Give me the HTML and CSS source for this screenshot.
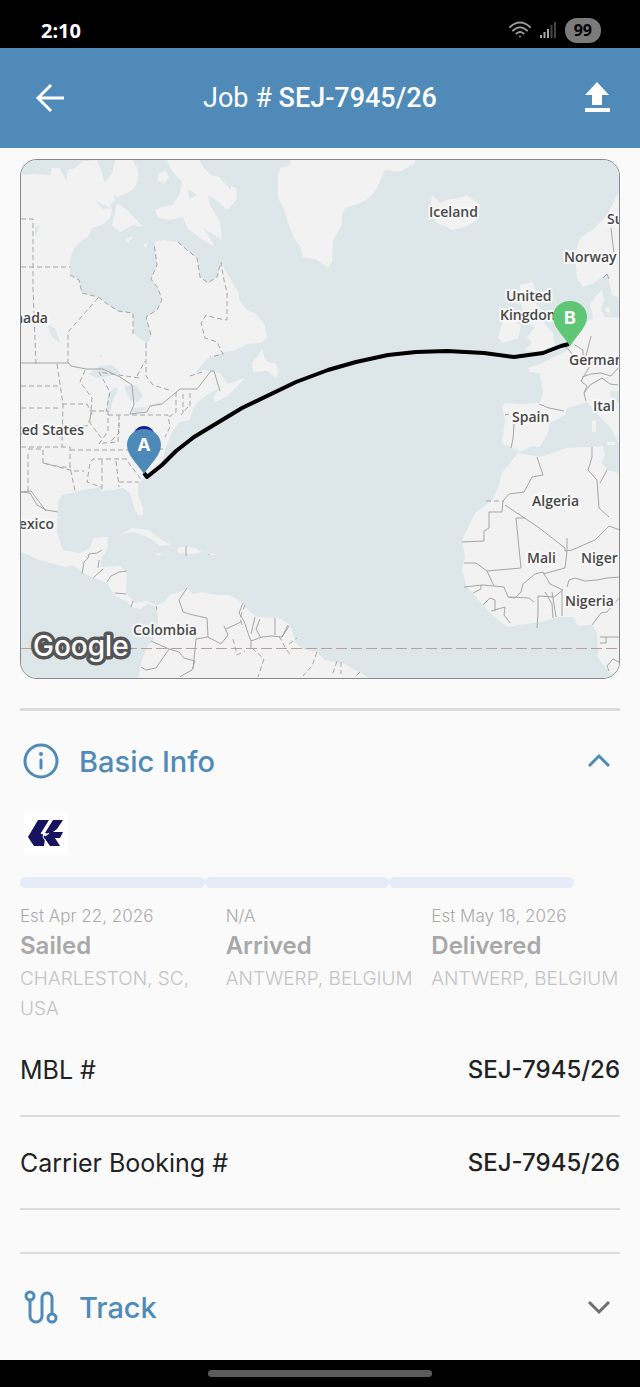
FILE: index.html
```html
<!DOCTYPE html>
<html lang="en">
  <head>
    <meta charset="UTF-8" />
    <meta name="viewport" content="width=device-width, initial-scale=1" />
    <title>Job # SEJ-7945/26</title>
    <link rel="stylesheet" href="styles.css">
  </head>
  <body>
    <div class="status-bar">
      <span class="time">2:10</span>
      <div class="status-icons">
        <svg width="22" height="18" viewBox="0 0 22 18" fill="none" stroke="#999" stroke-width="2" stroke-linecap="round">
          <path d="M1 6Q11-3 21 6M4 9.500Q11 3 18 9.500M7.500 12.500Q11 9.500 14.500 12.500" />
          <circle cx="11" cy="15.500" r="1" fill="#999" stroke="none" />
        </svg>
        <svg width="16" height="18" viewBox="0 0 16 18" stroke-width="2">
          <path d="M1 17v-3M4.500 17v-6M8 17V8" stroke="#aaa" />
          <path d="M11.500 17V4M15 17V1" stroke="#444" />
        </svg>
        <span class="battery">99</span>
      </div>
    </div>

    <header class="app-bar">
      <button class="icon-btn" aria-label="Back">
        <svg width="40" height="32" viewBox="0 0 40 32" fill="none" stroke="#fff" stroke-width="3">
          <path d="M37 16H11M24 3L11 16l13 13" />
        </svg>
      </button>
      <h1>Job # <strong>SEJ-7945/26</strong></h1>
      <button class="icon-btn" aria-label="Share">
        <svg width="40" height="32" viewBox="0 0 40 32" fill="#fff">
          <path d="M24 0L36 13h-7v10H19V13H12zM12 26h25v4H12z" />
        </svg>
      </button>
    </header>

    <main>
      <div class="map">
        <svg viewBox="21 160 598 518" role="img" aria-label="Route map">
          <rect class="sea" x="21" y="160" width="598" height="518" />

          <g class="land">
            <!-- Americas -->
            <path d="M20 175L33 174 50 175 52 168 60 168 66 181 68 170 75 168 83 161 97 160 101 170 105 182 112 173 115 160H133L138 170 138 180 135 188 127 193 119 197 113 195 115 200 110 205 112 210 110 218 102 225 92 228 88 237 82 240 75 247 70 258 70 275 79 280 82 293 98 297 106 303 118 311 133 313 133 332 137 337 148 343 151 335 146 317 157 310 162 300 158 288 151 279 157 265 154 242 163 240 178 242 187 250 197 258 200 277 208 283 217 277 221 262 228 275 238 292 240 302 247 310 255 313 265 325 267 338 260 343 248 344 235 350 222 353 207 359 195 373 203 370 220 373 225 380 228 384 245 378 228 396 215 402 213 397 220 388 210 393 200 400 193 408 190 420 180 422 173 430 165 450 163 460 154 467 145 475 138 485 138 495 143 507 143 515 139 516 135 510 132 500 130 493 123 488 113 490 103 491 100 487 83 490 75 492 62 495 58 502 57 533 63 550 80 553 90 548 93 538 108 537 107 550 102 557 100 567 120 566 127 572 126 593 135 603 147 601 157 605 163 603 170 595 180 592 187 588 193 594 202 592 216 595 230 595 243 603 249 611 258 617 280 618 290 625 296 643 303 649 317 652 325 660 343 663 353 669 360 672 370 679H138L142 660 147 647 153 640 158 627 158 613 154 606 148 604 140 609 132 607 126 601 115 596 107 583 93 578 82 572 73 565 65 567 40 560 21 552z" />
            <!-- Arctic islands -->
            <path d="M167 160L172 171 182 182 180 193 173 205 162 207 155 210 158 218 170 220 183 217 187 228 200 238 215 247 210 238 203 228 222 240 220 222 210 205 208 195 216 200 227 210 237 199 236 188 226 184 220 177 211 175 203 167 200 160z" />
            <path d="M117 203L127 210 143 227 133 225 120 232 112 225zM158 174L165 170 169 177 165 183 158 181zM125 239L134 236 128 243zM143 244l5-1-2 5z" />
            <path d="M205 160H231V190L219 177z" class="sea" />
            <!-- Greenland -->
            <path d="M290 160L290 165 280 168 278 175 278 198 284 209 288 222 294 238 300 246 303 257 317 260 328 268 332 262 333 240 342 225 342 214 345 208 358 204 366 200 375 192 385 170 400 172 415 163 415 160z" />
            <!-- Newfoundland, Caribbean -->
            <path d="M252 363L262 350 266 361 276 364 279 371 276 378 268 371 253 372zM122 534L132 528 148 530 162 540 172 545 160 546 150 538 134 532zM178 548L185 546 195 548 202 552 193 554 178 553zM154 553l8 1-3 2zM209 554h7v1h-7z" />
            <!-- Iceland -->
            <path d="M432 195L440 203 450 199 459 198 467 195 480 205 477 220 465 227 453 230 437 223 430 212z" />
            <!-- British Isles -->
            <path d="M520 285L533 282 535 290 530 296 539 307 543 322 553 333 555 345 540 352 525 350 532 342 527 337 535 327 528 322 530 314 522 309zM502 323L510 316 521 326 518 338 503 343 498 338z" />
            <!-- Scandinavia -->
            <path d="M620 190L607 215 595 228 580 238 575 255 577 278 583 287 594 283 607 273 612 295 620 298z" />
            <path d="M620 318L605 317 601 310 604 299 602 290 595 297 590 305 593 318 583 325 573 345 565 352 548 360 540 364 528 368 530 372 540 373 543 393 540 403 518 404 505 403 502 407 505 420 502 443 512 448 520 452 532 446 540 447 548 433 550 423 565 415 567 408 578 405 587 402 600 417 610 427 618 442H620z" />
            <path d="M592 421l4-1v12h-4zM607 442h8v3h-8zM605 309l4-2 2 6-5-1z" />
            <!-- Africa -->
            <path d="M518 453L540 457 567 448 590 447 603 446 605 455 602 463 607 470 620 473V672L610 673 598 658 597 633 592 625 578 626 573 617 558 617 545 621 533 623 507 627 490 613 467 587 462 570 465 557 462 540 475 513 492 500 498 487 502 473z" />
          </g>

          <!-- lakes and inner seas -->
          <g class="sea">
            <path d="M88 374L100 366 112 365 121 373 108 376 97 378zM107 410L108 393 116 387 118 390 112 402 110 413zM124 386L136 385 143 396 138 402 130 400 127 394zM130 409L143 407 149 408 135 414zM149 406l12-4v3zM48 325l7 3 5 15-9-7z" />
            <path d="M188 189l9 6-8 4zM95 201l16 7-8 1zM610 391h9v12l-9-8zM35 228l5-3-5 12zM99 355l4 1-2 2z" />
          </g>

          <!-- dashed state lines -->
          <g class="state">
            <path d="M21 219h12v70l3 75M21 267h49M98 298l-30 34v31M70 275l9 5 3 13 16 4 8 6 12 8 15 2v21M151 335l-5-18 11-7 5-10-4-12-7-9 6-14-3-22M178 242l9 8 10 8 3 19 8 6 9-6 4-15 3 18 3 12v28l-12-2-9-3-5 8 4 15 12 4 6 12-13 3M146 343v33l7 9 19 6" />
            <path d="M21 386h37M21 408h40M57 364l6 40-1 43M62 404h25l5 10-5 12h-25M85 370l-5 12 12 16-2 25 12 16M91 411h17v20l-9 13 5-1 14-1 1-20M119 415v18l-8 8M108 415h60l2 12-5 10M21 447h49v20l5 24M28 449h15v14l18 4h10M43 463l31 8h10M70 450h57l37-1M127 459h-34l-3 4-3 19 14 5M102 460v31M116 461l3 26M128 462l13 17M119 482h20M176 392v20l-7 5M183 394v19M190 393v13M188 407l-7 8M139 378l-40-6 11 20-4 20M190 376l12-4M137 376l8-15" />
            <path d="M245 605l-5 13 3 10M233 639l4 16 8-4M252 648l12 11-6 18M279 636l7 13 4 5M317 652l-5 14-9 10M337 661l-5 15M341 662v12M360 672l-5 5M289 644l8-6M28 454v39M209 554v1M486 501h18" />
          </g>

          <!-- country borders -->
          <g class="border">
            <path d="M21 363h48l2 3 15 3h17l17 8 12 8 2 20-4 9 17-2 3-6 12-2 18-15h17l14-18h3l6 20M21 492l10-1 15 20M21 492l9 1 7 12 9 5 12 2M82 574l2-12 4-4 1-4 8-1 5-3M93 578l10-9M98 568l1-8M107 582l4-6 8-4 8-1M115 593l11 1M131 607l2-6M157 610l-1-4M187 588l-8 12 4 12 10 3 14 3 1 19 13 7 7-9-4-9M243 603l-4 10 5 8 5 15 2 5v8M251 641l11-4 10-1 10 1 6-12M241 622l-15 7M275 618v17M282 637l7-11M255 617l-4 17M260 619l-4 10 5 9M208 637l-12 2-3 30M151 641l18 8-13 19-10 2-5-3M169 649l10 3 5 6 11 3-3 9-11 6-1 1" />
            <path d="M611 228l3 25M603 278l4-4 2 5M575 345l8 5v5l3 1 5-20M564 346l5 4 6 8M594 359l-13 22 6 5-3 7 2 8M582 377l9-3 10-1 10 3 7-8M584 393l6-8 12-7 8 6 8 1M539 404l10 4 15 3M505 415l4-1M514 424l-1 15-2 9M537 457l6 18-11 2-8 15-15 2-6 7-1 11H489v16l-5 3v10l-22 1M505 505l33 22 27 21v3l7-1 23-10 14-14 11 4M567 538v13l-2 17-22 6M516 518h9M516 518l5 50-34 3M592 447v10l-4 13 9 10 2 28 10 9M607 470l-7 13M464 563h12l11 8 7 15 10 1 4 10 7 1 6-6 2-8 12-10 8-2 7 12 13 6-9 7-16-1v17l-1 15M464 587l9-1 9-1 12 1M473 593l8-4v-4M483 605l7-7 5 2v11M491 611l14-4-1 8 6 8M509 597l20 1 5 4M545 592l7 12 1 14M552 592l4 25M562 591v25M567 587l2-7 6-2 10 3 12-1 10-2 13-1M592 625l9-12 6-1 13-15M600 637h20M600 643h6v-6M609 671l-2-5 6-7 6 3" />
            <path d="M186 546v10" />
          </g>

          <path class="equator" d="M21 648.500H619" />

          <g class="place">
            <text x="429" y="217">Iceland</text>
            <text x="607" y="224">Su</text>
            <text x="564" y="262">Norway</text>
            <text x="506" y="301">United</text>
            <text x="500" y="320">Kingdom</text>
            <text x="569" y="365">German</text>
            <text x="593" y="411">Ital</text>
            <text x="512" y="422">Spain</text>
            <text x="532" y="506">Algeria</text>
            <text x="527" y="563">Mali</text>
            <text x="581" y="563">Niger</text>
            <text x="565" y="606">Nigeria</text>
            <text x="133" y="635">Colombia</text>
            <text x="48" y="323" text-anchor="end">Canada</text>
            <text x="84" y="435" text-anchor="end">United States</text>
            <text x="54" y="529" text-anchor="end">Mexico</text>
          </g>

          <path class="route" d="M144 473L147 477 162 465 176 451 194 437 242 408 296 382 328 370 356 362 388 355 416 352 447 351 484 353 514 357 543 353 561 346 569 344" />

          <!-- markers -->
          <circle cx="144" cy="437" r="11" fill="#1c1c94" />
          <path fill="#4d8ab9" d="M144 429c-10 0-17 7-17 16 0 10 10 18 17 29 7-11 17-19 17-29 0-9-7-16-17-16z" />
          <path fill="#5fc675" d="M570 301c-10 0-17 7-17 16 0 10 10 18 17 29 7-11 17-19 17-29 0-9-7-16-17-16z" />
          <text class="pin" x="144" y="451">A</text>
          <text class="pin" x="570" y="324">B</text>

          <text class="google" x="33" y="656">Google</text>
        </svg>
      </div>

      <section class="panel">
        <button class="panel-head" aria-expanded="true">
          <svg width="42" height="42" viewBox="0 0 42 42" fill="none" stroke="#4f8ab8" stroke-width="3">
            <circle cx="21" cy="21" r="16" />
            <path d="M21 20v8" stroke-linecap="round" />
            <circle cx="21" cy="14" r="2" fill="#4f8ab8" stroke="none" />
          </svg>
          <span>Basic Info</span>
          <svg width="42" height="42" viewBox="0 0 42 42" fill="none" stroke="#4f8ab8" stroke-width="3">
            <path d="M11 26l10-10 10 10" />
          </svg>
        </button>

        <div class="carrier">
          <svg width="44" height="44" viewBox="0 0 44 44" role="img" aria-label="Carrier logo">
            <path fill="#17135f" d="M14 9h11l-8 13 4 3 4-2-4-1 8-13h10l-6 9-4 3h10l-3 6h-5l5 8H26l-5-7-1 7H10L4 26z" />
            <path d="M26 9l-9 14M20 22l-1 4 6 9M25 22l-4 3" stroke="#fff" fill="none" />
          </svg>
        </div>

        <div class="progress">
          <span></span>
          <span></span>
          <span></span>
        </div>

        <div class="steps">
          <div class="step">
            <p class="date">Est Apr 22, 2026</p>
            <h3>Sailed</h3>
            <p class="location">CHARLESTON, SC, USA</p>
          </div>
          <div class="step">
            <p class="date">N/A</p>
            <h3>Arrived</h3>
            <p class="location">ANTWERP, BELGIUM</p>
          </div>
          <div class="step">
            <p class="date">Est May 18, 2026</p>
            <h3>Delivered</h3>
            <p class="location">ANTWERP, BELGIUM</p>
          </div>
        </div>

        <dl class="details">
          <div class="row">
            <dt>MBL #</dt>
            <dd>SEJ-7945/26</dd>
          </div>
          <div class="row">
            <dt>Carrier Booking #</dt>
            <dd>SEJ-7945/26</dd>
          </div>
        </dl>
      </section>

      <section class="panel track">
        <button class="panel-head" aria-expanded="false">
          <svg width="42" height="42" viewBox="0 0 42 42" fill="none" stroke="#4f8ab8" stroke-width="3">
            <circle cx="10" cy="10" r="4" />
            <circle cx="32" cy="32" r="4" />
            <path d="M10 14v16a6 6 0 0 0 12 0V12a5 5 0 0 1 10 0v16" />
          </svg>
          <span>Track</span>
          <svg width="42" height="42" viewBox="0 0 42 42" fill="none" stroke="#6e6e6e" stroke-width="3">
            <path d="M11 16l10 10 10-10" />
          </svg>
        </button>
      </section>
    </main>

    <footer class="nav-bar"><span></span></footer>
  </body>
</html>
```
FILE: styles.css
```css
* {
  box-sizing: border-box;
}
body {
  margin: 0;
  background: #fafafa;
  color: #222;
  font-family: Inter, "Open Sans", sans-serif;
}
h1,
h3,
p,
dl,
dd {
  margin: 0;
}
button {
  border: 0;
  padding: 0;
  background: none;
  font-family: inherit;
  cursor: pointer;
}
svg {
  display: block;
}

.status-bar {
  display: flex;
  align-items: center;
  justify-content: space-between;
  height: 48px;
  padding: 12px 39px 0 41px;
  background: #000;
}
.time {
  color: #fff;
  font: 700 20px "Noto Sans", sans-serif;
}
.status-icons {
  display: flex;
  align-items: center;
  gap: 9px;
}
.battery {
  padding: 0 9px;
  border-radius: 12px;
  background: #7b7b7b;
  color: #000;
  font: 700 16px/25px "Noto Sans", sans-serif;
}

.app-bar {
  display: flex;
  align-items: center;
  justify-content: space-between;
  height: 100px;
  padding: 0 27px;
  background: #4f8ab8;
}
.app-bar h1 {
  color: #fff;
  font: 400 27px Roboto, sans-serif;
}
.app-bar strong {
  font-weight: 500;
}

main {
  padding: 11px 20px 0 20px;
}
.map {
  overflow: hidden;
  border: 1px solid #888;
  border-radius: 17px;
}
.map svg {
  width: 100%;
}
.land {
  fill: #f2f2f2;
}
.sea {
  fill: #dde6e9;
}
.state,
.border {
  fill: none;
  stroke: #a5a5a5;
}
.state {
  stroke-dasharray: 5 3;
}
.equator {
  stroke: #bd9d9a;
  stroke-dasharray: 11 4;
}
.place {
  fill: #484848;
  stroke: #f8f8f8;
  stroke-width: 4px;
  stroke-linejoin: round;
  paint-order: stroke;
  font: 600 14px "Open Sans", sans-serif;
}
.route {
  fill: none;
  stroke: #000;
  stroke-width: 4px;
  stroke-linejoin: round;
}
.pin {
  fill: #fff;
  font: 700 18px Inter, sans-serif;
  text-anchor: middle;
}
.google {
  fill: #fff;
  stroke: #555;
  stroke-width: 7px;
  stroke-linejoin: round;
  paint-order: stroke;
  font: 500 28px Inter, sans-serif;
}

.panel {
  margin-top: 29px;
  border-top: 3px solid #dcdcdc;
}
.panel-head {
  display: flex;
  align-items: center;
  gap: 17px;
  width: 100%;
  height: 100px;
  color: #4f8ab8;
  font-size: 29px;
  font-weight: 500;
}
.panel-head span {
  flex: 1;
  text-align: left;
}
.carrier {
  width: 44px;
  margin-left: 4px;
  background: #fff;
}
.progress {
  display: flex;
  margin-top: 22px;
  padding-right: 46px;
}
.progress span {
  flex: 1;
  height: 11px;
  border-radius: 6px;
  background: #e5ecf7;
}
.steps {
  display: grid;
  grid-template-columns: repeat(3, 1fr);
  gap: 17px;
  margin-top: 14px;
}
.date {
  color: #aaa;
  font-size: 17px;
  font-weight: 300;
  line-height: 28px;
}
.step h3 {
  margin-bottom: 2px;
  color: #a8a8a8;
  font-size: 24px;
  font-weight: 600;
  line-height: 32px;
}
.location {
  color: #c3c3c3;
  font-size: 19px;
  font-weight: 300;
  line-height: 30px;
}
.row {
  display: flex;
  align-items: center;
  justify-content: space-between;
  height: 93px;
  border-bottom: 2px solid #dcdcdc;
}
.row dt {
  font-size: 25px;
}
.row dd {
  font-size: 24px;
  font-weight: 500;
}
.track {
  margin-top: 42px;
  border-top-width: 2px;
}
.track .panel-head {
  height: 106px;
}

.nav-bar {
  display: flex;
  align-items: center;
  justify-content: center;
  height: 27px;
  background: #000;
}
.nav-bar span {
  width: 35%;
  height: 7px;
  border-radius: 4px;
  background: #5c5c5c;
}
```
